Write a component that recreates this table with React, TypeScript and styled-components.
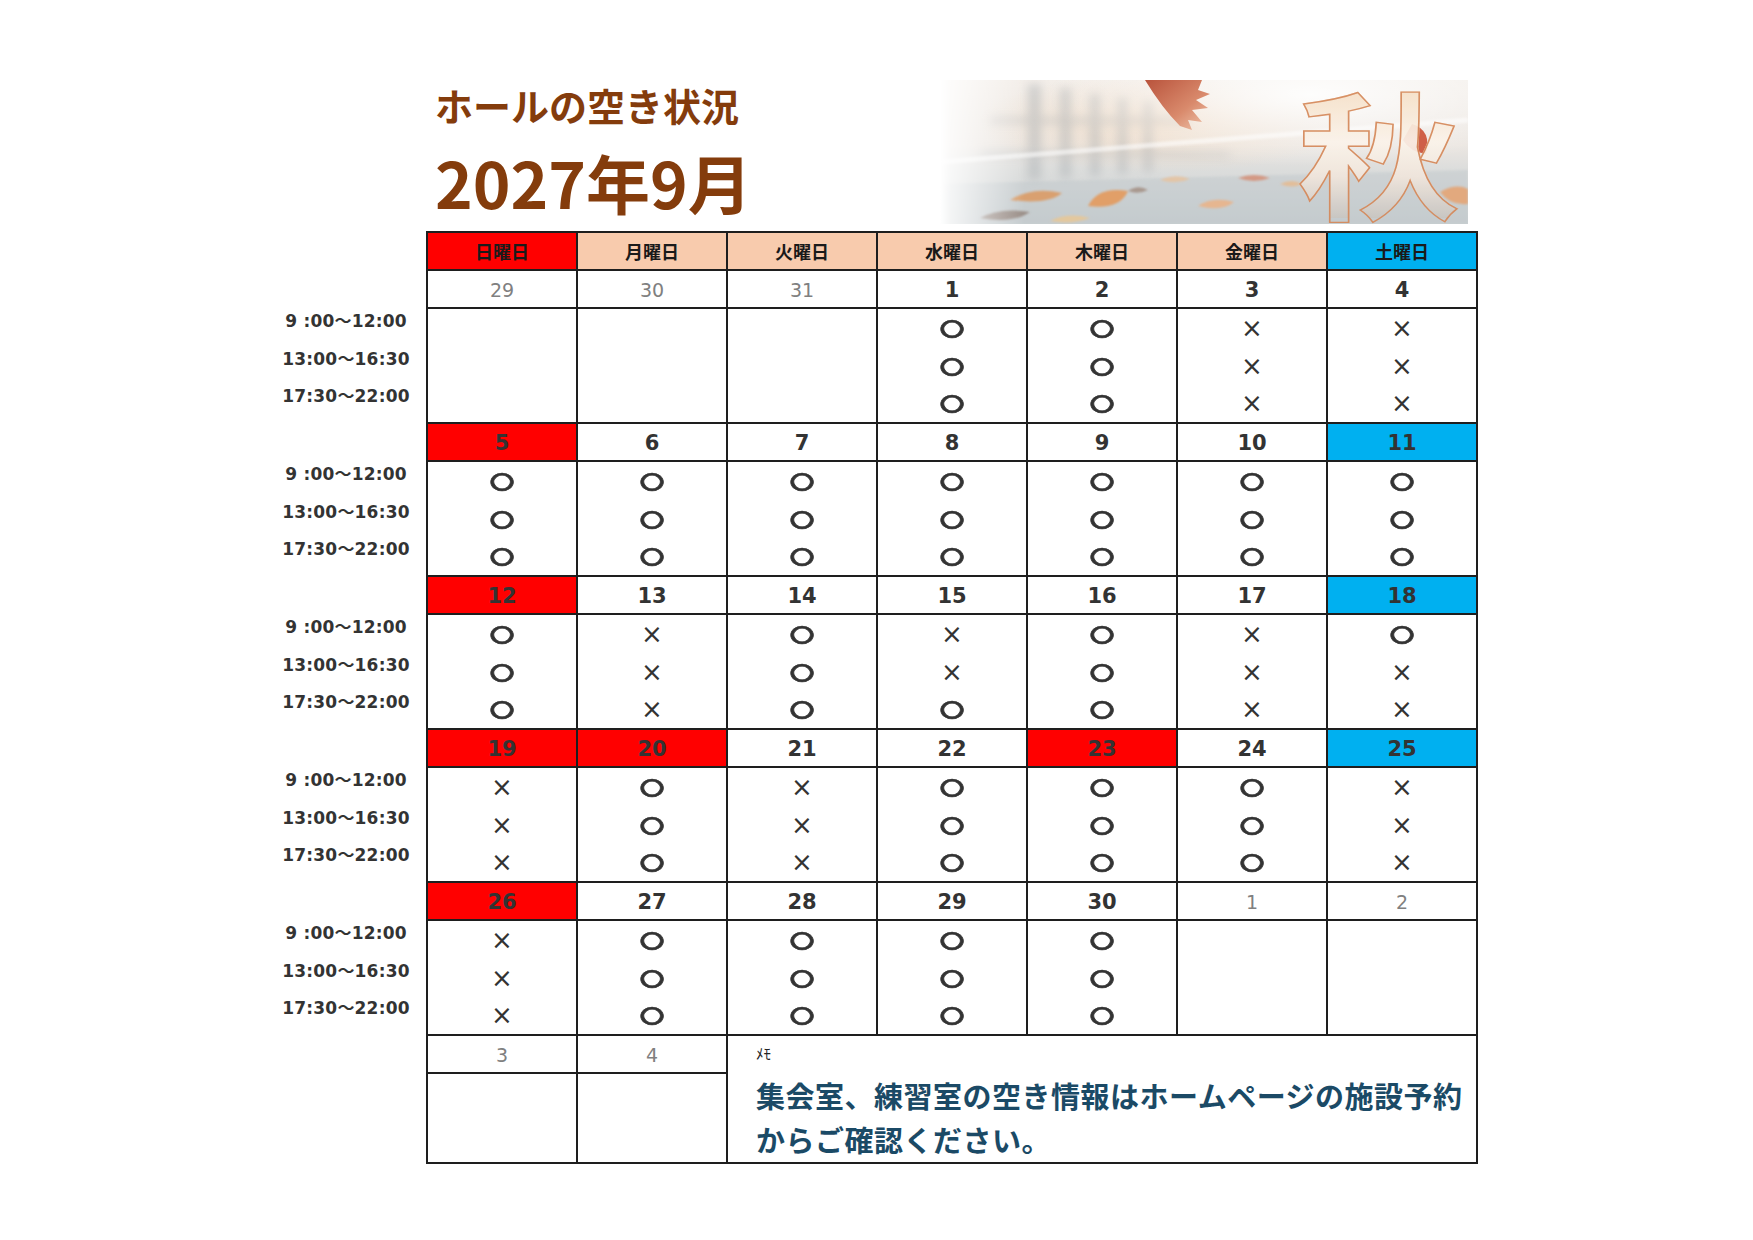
import styled, { createGlobalStyle } from 'styled-components';

// START: data
type Mark = 'o' | 'x';
type Tone = 'plain' | 'sun' | 'sat';

interface Day {
    n: number;
    muted?: boolean;
    tone?: Tone;
    slots?: Mark[];
}

const m = (s: string): Mark[] => s.split('') as Mark[];

const WEEKDAYS: { label: string; tone: Tone | 'wk' }[] = [
    { label: '日曜日', tone: 'sun' },
    { label: '月曜日', tone: 'wk' },
    { label: '火曜日', tone: 'wk' },
    { label: '水曜日', tone: 'wk' },
    { label: '木曜日', tone: 'wk' },
    { label: '金曜日', tone: 'wk' },
    { label: '土曜日', tone: 'sat' },
];

const WEEKS: Day[][] = [
    [
        { n: 29, muted: true },
        { n: 30, muted: true },
        { n: 31, muted: true },
        { n: 1, slots: m('ooo') },
        { n: 2, slots: m('ooo') },
        { n: 3, slots: m('xxx') },
        { n: 4, slots: m('xxx') },
    ],
    [
        { n: 5, tone: 'sun', slots: m('ooo') },
        { n: 6, slots: m('ooo') },
        { n: 7, slots: m('ooo') },
        { n: 8, slots: m('ooo') },
        { n: 9, slots: m('ooo') },
        { n: 10, slots: m('ooo') },
        { n: 11, tone: 'sat', slots: m('ooo') },
    ],
    [
        { n: 12, tone: 'sun', slots: m('ooo') },
        { n: 13, slots: m('xxx') },
        { n: 14, slots: m('ooo') },
        { n: 15, slots: m('xxo') },
        { n: 16, slots: m('ooo') },
        { n: 17, slots: m('xxx') },
        { n: 18, tone: 'sat', slots: m('oxx') },
    ],
    [
        { n: 19, tone: 'sun', slots: m('xxx') },
        { n: 20, tone: 'sun', slots: m('ooo') },
        { n: 21, slots: m('xxx') },
        { n: 22, slots: m('ooo') },
        { n: 23, tone: 'sun', slots: m('ooo') },
        { n: 24, slots: m('ooo') },
        { n: 25, tone: 'sat', slots: m('xxx') },
    ],
    [
        { n: 26, tone: 'sun', slots: m('xxx') },
        { n: 27, slots: m('ooo') },
        { n: 28, slots: m('ooo') },
        { n: 29, slots: m('ooo') },
        { n: 30, slots: m('ooo') },
        { n: 1, muted: true },
        { n: 2, muted: true },
    ],
];

const TIMES = ['9 :00～12:00', '13:00～16:30', '17:30～22:00'];

// START: banner drawing
const AutumnScene = () => (
    <svg width="528" height="144" viewBox="0 0 528 144">
        <defs>
            <linearGradient id="sky" x1="0" y1="0" x2="0" y2="1">
                <stop offset="0" stopColor="#f3eee9" />
                <stop offset="0.45" stopColor="#ebe6e1" />
                <stop offset="0.62" stopColor="#dcdddc" />
                <stop offset="1" stopColor="#c9cfd1" />
            </linearGradient>
            <linearGradient id="fadeGrad" x1="0" y1="0" x2="1" y2="0">
                <stop offset="0" stopColor="#000" />
                <stop offset="0.02" stopColor="#333" />
                <stop offset="0.16" stopColor="#fff" />
                <stop offset="1" stopColor="#fff" />
            </linearGradient>
            <radialGradient id="haze" cx="0.7" cy="0.1" r="0.5">
                <stop offset="0" stopColor="#ffffff" stopOpacity="0.9" />
                <stop offset="1" stopColor="#ffffff" stopOpacity="0" />
            </radialGradient>
            <radialGradient id="warm" cx="0.42" cy="0.3" r="0.35">
                <stop offset="0" stopColor="#f1dcc6" stopOpacity="0.8" />
                <stop offset="1" stopColor="#f1dcc6" stopOpacity="0" />
            </radialGradient>
            <linearGradient id="bigLeaf" x1="0" y1="0" x2="1" y2="1">
                <stop offset="0" stopColor="#b9533c" />
                <stop offset="0.6" stopColor="#d98a6c" />
                <stop offset="1" stopColor="#f0c8b0" />
            </linearGradient>
            <mask id="fadeMask">
                <rect width="528" height="144" fill="url(#fadeGrad)" />
            </mask>
            <filter id="blur" x="-20%" y="-20%" width="140%" height="140%">
                <feGaussianBlur stdDeviation="5" />
            </filter>
            <filter id="soft" x="-20%" y="-20%" width="140%" height="140%">
                <feGaussianBlur stdDeviation="1" />
            </filter>
        </defs>
        <g mask="url(#fadeMask)">
            <rect width="528" height="144" fill="url(#sky)" />
            <rect width="528" height="144" fill="url(#warm)" />
            <g filter="url(#blur)" fill="#a3a8ac" opacity="0.42">
                <rect x="88" y="4" width="13" height="96" />
                <rect x="120" y="8" width="11" height="90" />
                <rect x="150" y="14" width="10" height="82" />
                <rect x="178" y="18" width="9" height="76" />
                <rect x="204" y="22" width="8" height="70" />
                <rect x="50" y="38" width="200" height="5" />
                <rect x="40" y="72" width="250" height="4" />
            </g>
            <path d="M0 82 L528 40" stroke="#ffffff" strokeWidth="5" opacity="0.55" filter="url(#soft)" />
            <rect width="528" height="144" fill="url(#haze)" />
            <path d="M0 104 L528 90 L528 144 L0 144 Z" fill="#bfc7cb" opacity="0.45" filter="url(#soft)" />
            <g filter="url(#soft)">
                <path d="M70 120 Q92 106 122 113 Q108 125 70 120 Z" fill="#d9a070" />
                <path d="M40 138 Q60 127 90 132 Q72 144 40 138 Z" fill="#8c7a70" opacity="0.75" />
                <path d="M148 126 Q158 106 188 111 Q180 130 148 126 Z" fill="#e19f68" />
                <path d="M258 126 Q272 116 294 122 Q282 132 258 126 Z" fill="#e6b690" />
                <path d="M220 100 Q236 93 250 99 Q236 105 220 100 Z" fill="#e9c29c" opacity="0.8" />
                <path d="M298 98 Q314 92 330 98 Q314 104 298 98 Z" fill="#d5856a" opacity="0.75" />
                <path d="M110 141 Q128 132 150 138 Q132 145 110 141 Z" fill="#e3c89e" />
                <path d="M500 112 Q516 103 528 109 L528 124 Q510 126 500 112 Z" fill="#e2a97e" />
                <path d="M188 111 Q198 104 208 110 Q198 115 188 111 Z" fill="#9a8072" opacity="0.7" />
                <path d="M340 104 Q352 98 362 104 Q352 109 340 104 Z" fill="#e7b98c" opacity="0.8" />
            </g>
            <path
                d="M205 0 L262 0 L258 10 L270 14 L256 20 L268 28 L252 30 L262 42 L248 40 L252 50 L240 46 Q222 28 205 0 Z"
                fill="url(#bigLeaf)"
            />
            <path d="M472 44 Q492 50 486 74 Q470 72 463 60 Z" fill="#c9472c" opacity="0.85" />
        </g>
    </svg>
);

// START: page
const App = () => {
    return (
        <>
            <GlobalStyle />
            <Page>
                <Header>
                    <TitleBlock>
                        <Title>ホールの空き状況</Title>
                        <MonthTitle>2027年9月</MonthTitle>
                    </TitleBlock>
                    <Banner>
                        <AutumnScene />
                        <SeasonGlyph>秋</SeasonGlyph>
                    </Banner>
                </Header>

                <Body>
                    <TimeColumn>
                        {WEEKS.map((_, w) => (
                            <TimeGroup key={w}>
                                {TIMES.map((t) => (
                                    <TimeLabel key={t}>{t}</TimeLabel>
                                ))}
                            </TimeGroup>
                        ))}
                    </TimeColumn>

                    <Table>
                        {WEEKDAYS.map((d) => (
                            <DayHead key={d.label} $tone={d.tone}>
                                {d.label}
                            </DayHead>
                        ))}
                        {WEEKS.map((week, w) => [
                            ...week.map((day, i) => (
                                <DateCell key={`d${w}-${i}`} $tone={day.tone || 'plain'} $muted={!!day.muted}>
                                    {day.n}
                                </DateCell>
                            )),
                            ...week.map((day, i) => (
                                <SlotCell key={`s${w}-${i}`}>
                                    {day.slots?.map((s, k) => (
                                        <Slot key={k}>{s === 'o' ? <Circle>〇</Circle> : <Cross>×</Cross>}</Slot>
                                    ))}
                                </SlotCell>
                            )),
                        ])}
                        <DateCell $tone="plain" $muted>3</DateCell>
                        <DateCell $tone="plain" $muted>4</DateCell>
                        <MemoCell>
                            <MemoLabel>ﾒﾓ</MemoLabel>
                            <MemoText>集会室、練習室の空き情報はホームページの施設予約からご確認ください。</MemoText>
                        </MemoCell>
                        <SlotCell />
                        <SlotCell />
                    </Table>
                </Body>
            </Page>
        </>
    );
};
export default App;

// START: styling
const GlobalStyle = createGlobalStyle`
    html, body {
        margin: 0;
        padding: 0;
        background: #ffffff;
    }
    body {
        font-family: "DejaVu Sans", "Noto Sans CJK JP", sans-serif;
        color: #333333;
    }
`;

const Page = styled.div`
    width: 1753px;
    height: 1240px;
    padding-left: 266px;
    box-sizing: border-box;
`;

const Header = styled.header`
    width: 1212px;
    box-sizing: border-box;
    padding: 80px 10px 0 169px;
    margin-bottom: 7px;
    display: flex;
    align-items: flex-start;
    justify-content: space-between;
`;

const TitleBlock = styled.div`
    display: flex;
    flex-direction: column;
    font-family: "Noto Sans CJK JP", sans-serif;
    font-weight: 700;
    color: #843c0c;
`;

const Title = styled.h1`
    margin: 0;
    font-size: 38px;
    line-height: 50px;
    font-weight: 700;
`;

const MonthTitle = styled.h2`
    margin: 13px 0 0 0;
    font-size: 64px;
    line-height: 76px;
    font-weight: 700;
`;

const Banner = styled.div`
    position: relative;
    width: 528px;
    height: 144px;
    overflow: hidden;

    svg {
        display: block;
    }
`;

const SeasonGlyph = styled.span`
    position: absolute;
    left: 370px;
    top: 0;
    width: 138px;
    height: 138px;
    font-family: "Noto Sans CJK JP", sans-serif;
    font-weight: 700;
    font-size: 138px;
    line-height: 1;
    text-align: center;
    transform: scaleX(1.18);
    background: linear-gradient(180deg, #f4dcc0 0%, #fbf3ea 45%, #f1e6dc 70%, #c9c6c2 100%);
    -webkit-background-clip: text;
    background-clip: text;
    color: transparent;
    -webkit-text-stroke: 1.4px #d58859;
    opacity: 0.92;
`;

const Body = styled.div`
    display: flex;
    align-items: flex-start;
`;

const TimeColumn = styled.div`
    width: 160px;
    padding-top: 78px;
    display: flex;
    flex-direction: column;
    gap: 40px;
`;

const TimeGroup = styled.div`
    height: 113px;
    display: flex;
    flex-direction: column;
`;

const TimeLabel = styled.div`
    flex: 1;
    text-align: center;
    font-family: "DejaVu Sans", "Noto Sans CJK JP", sans-serif;
    font-weight: 700;
    font-size: 17px;
    line-height: 24px;
    letter-spacing: 0.2px;
    color: #333333;
`;

const Table = styled.div`
    display: grid;
    grid-template-columns: repeat(7, 148px);
    grid-template-rows: 36px repeat(5, 36px 113px) 36px 88px;
    gap: 2px;
    padding: 2px;
    background: #1e1e1e;
`;

const headBg = { sun: '#ff0000', wk: '#f8cbad', sat: '#00b0f0', plain: '#ffffff' } as const;

const DayHead = styled.div<{ $tone: 'sun' | 'wk' | 'sat' }>`
    background: ${(p) => headBg[p.$tone]};
    display: flex;
    align-items: center;
    justify-content: center;
    font-family: "Noto Sans CJK JP", sans-serif;
    font-weight: 700;
    font-size: 18px;
    color: #1a1a1a;
`;

const DateCell = styled.div<{ $tone: Tone; $muted: boolean }>`
    background: ${(p) => headBg[p.$tone]};
    display: flex;
    align-items: center;
    justify-content: center;
    font-family: "DejaVu Sans", sans-serif;
    font-weight: ${(p) => (p.$muted ? 400 : 700)};
    font-size: ${(p) => (p.$muted ? '19px' : '21px')};
    color: ${(p) => (p.$muted ? '#808080' : '#333333')};
    padding-top: 2px;
    box-sizing: border-box;
`;

const SlotCell = styled.div`
    background: #ffffff;
    display: flex;
    flex-direction: column;
`;

const Slot = styled.div`
    flex: 1;
    display: flex;
    align-items: center;
    justify-content: center;
    color: #333333;
`;

const Circle = styled.span`
    font-family: "Noto Sans CJK JP", sans-serif;
    font-weight: 700;
    font-size: 22px;
    line-height: 1;
    -webkit-text-stroke: 0.7px #333333;
    display: inline-block;
    transform: scale(1.12, 0.84);
`;

const Cross = styled.span`
    font-family: "DejaVu Sans", sans-serif;
    font-size: 26px;
    line-height: 1;
`;

const MemoCell = styled.div`
    grid-column: 3 / span 5;
    grid-row: 12 / span 2;
    background: #ffffff;
    padding: 6px 0 0 28px;
    box-sizing: border-box;
`;

const MemoLabel = styled.div`
    font-family: "Noto Sans CJK JP", sans-serif;
    font-size: 15px;
    line-height: 22px;
    color: #222222;
`;

const MemoText = styled.p`
    margin: 9px 0 0 0;
    font-family: "Noto Sans CJK JP", sans-serif;
    font-weight: 700;
    font-size: 29px;
    line-height: 44px;
    letter-spacing: 0.5px;
    color: #1b4a66;
`;
